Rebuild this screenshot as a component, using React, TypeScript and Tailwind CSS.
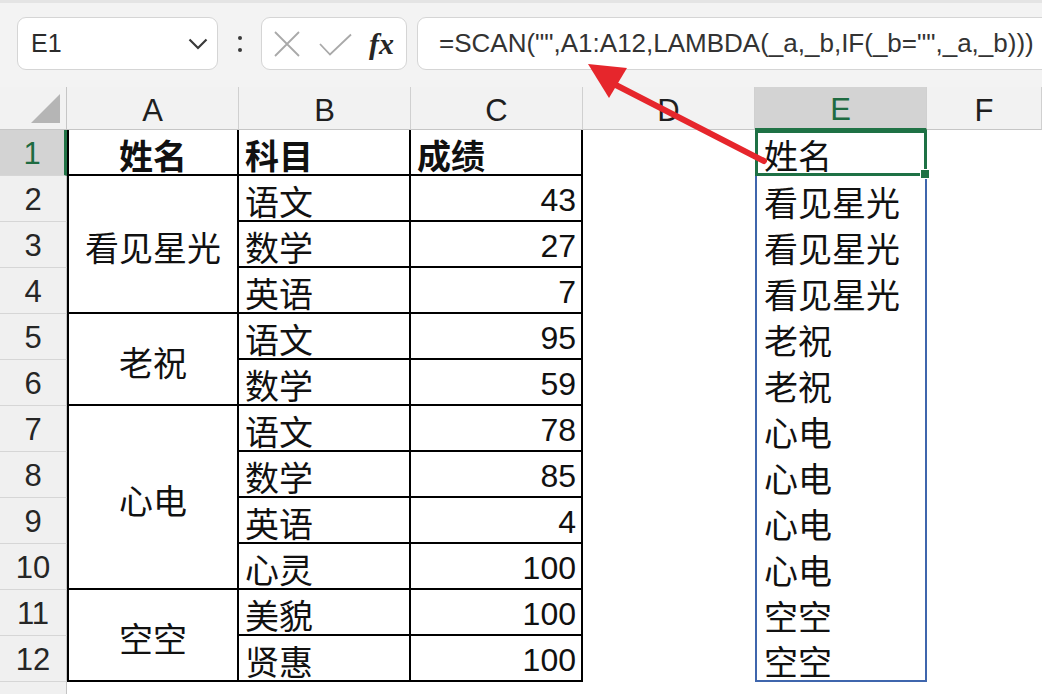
import React from "react";

type Row = {
  name?: string;
  span?: number;
  subject: string;
  score: number;
  spill: string;
};

const rows: Row[] = [
  { name: "看见星光", span: 3, subject: "语文", score: 43, spill: "看见星光" },
  { subject: "数学", score: 27, spill: "看见星光" },
  { subject: "英语", score: 7, spill: "看见星光" },
  { name: "老祝", span: 2, subject: "语文", score: 95, spill: "老祝" },
  { subject: "数学", score: 59, spill: "老祝" },
  { name: "心电", span: 4, subject: "语文", score: 78, spill: "心电" },
  { subject: "数学", score: 85, spill: "心电" },
  { subject: "英语", score: 4, spill: "心电" },
  { subject: "心灵", score: 100, spill: "心电" },
  { name: "空空", span: 2, subject: "美貌", score: 100, spill: "空空" },
  { subject: "贤惠", score: 100, spill: "空空" },
];

const spanClass: Record<number, string> = {
  2: "row-span-2",
  3: "row-span-3",
  4: "row-span-4",
};

const cjk = "font-['Noto_Sans_CJK_SC',sans-serif] text-[34px] text-[#111]";
const latin = "font-['Liberation_Sans',sans-serif]";

function RowHead({ n, active }: { n: number; active?: boolean }) {
  return (
    <div
      className={
        "flex items-center justify-center pt-[3px] text-[31px] border-b border-[#d6d6d6] " +
        latin +
        (active
          ? " bg-[#d3d3d3] text-[#1e6b41] border-r-[3px] border-r-[#217346]"
          : " bg-[#f0f0f0] text-[#262626] border-r border-r-[#c4c4c4]")
      }
    >
      {n}
    </div>
  );
}

function ColHead({ label, active }: { label: string; active?: boolean }) {
  return (
    <div
      className={
        "flex items-center justify-center pt-[6px] text-[31px] border-r border-[#d0d0d0] " +
        latin +
        (active
          ? " bg-[#d3d3d3] text-[#1e6b41] border-b-2 border-b-[#217346]"
          : " bg-[#f2f2f2] text-[#1f1f1f] border-b border-b-[#c6c6c6]")
      }
    >
      {label}
    </div>
  );
}

function Toolbar() {
  return (
    <div className="flex h-[87px] items-start bg-[#f3f3f3] pt-[14px] pl-[17px] border-t-[3px] border-[#e4e4e4]">
      <div className="flex h-[53px] w-[201px] shrink-0 items-center justify-between rounded-[9px] border border-[#d5d5d5] bg-white pl-[13px] pr-[9px]">
        <span className={"text-[25px] text-[#2b2b2b] " + latin}>E1</span>
        <svg width="20" height="12" viewBox="0 0 20 12">
          <polyline points="1.5,1.5 10,10 18.5,1.5" fill="none" stroke="#3a3a3a" strokeWidth="2.2" />
        </svg>
      </div>
      <div className="flex h-[53px] w-[43px] shrink-0 flex-col items-center justify-center gap-[8px]">
        <div className="h-[4px] w-[4px] rounded-full bg-[#3a3a3a]" />
        <div className="h-[4px] w-[4px] rounded-full bg-[#3a3a3a]" />
      </div>
      <div className="flex h-[53px] w-[146px] shrink-0 items-center rounded-[9px] border border-[#d5d5d5] bg-white pl-[12px]">
        <svg width="26" height="26" viewBox="0 0 26 26">
          <path d="M1 1 L25 25 M25 1 L1 25" stroke="#a9a9a9" strokeWidth="1.8" />
        </svg>
        <svg width="34" height="24" viewBox="0 0 34 24" className="ml-[19px] mt-[2px]">
          <polyline points="1,11 11,21.5 32,1.5" fill="none" stroke="#a9a9a9" strokeWidth="1.8" />
        </svg>
        <span className="ml-[16px] font-['Liberation_Serif',serif] text-[30px] font-bold italic leading-none text-[#262626]">
          fx
        </span>
      </div>
      <div className={"ml-[10px] flex h-[53px] w-[660px] shrink-0 items-center rounded-[9px] border border-[#d5d5d5] bg-white pl-[21px] text-[26px] text-[#333] " + latin}>
        {'=SCAN("",A1:A12,LAMBDA(_a,_b,IF(_b="",_a,_b)))'}
      </div>
    </div>
  );
}

export default function App() {
  return (
    <div className="relative h-[694px] w-[1042px] overflow-hidden bg-white">
      <Toolbar />
      <div className="grid h-[607px] grid-cols-[67px_172px_172px_172px_172px_172px_1fr] grid-rows-[43px_repeat(12,46px)_1fr] bg-white">
        {/* header row */}
        <div className="flex items-end justify-end border-r border-b border-[#c6c6c6] bg-[#f2f2f2] pb-[6px] pr-[6px]">
          <svg width="29" height="29" viewBox="0 0 29 29">
            <polygon points="29,0 29,29 0,29" fill="#b5b5b5" />
          </svg>
        </div>
        <ColHead label="A" />
        <ColHead label="B" />
        <ColHead label="C" />
        <ColHead label="D" />
        <ColHead label="E" active />
        <ColHead label="F" />

        {/* row 1 */}
        <RowHead n={1} active />
        <div className={"flex items-center justify-center border-x-2 border-b-2 border-black pt-[4px] font-bold " + cjk}>
          姓名
        </div>
        <div className={"flex items-center border-r-2 border-b-2 border-black pl-[6px] pt-[4px] font-bold " + cjk}>
          科目
        </div>
        <div className={"flex items-center border-r-2 border-b-2 border-black pl-[6px] pt-[4px] font-bold " + cjk}>
          成绩
        </div>
        <div />
        <div className={"relative flex items-center border-[3px] border-[#1e7145] pl-[6px] pt-[3px] " + cjk}>
          姓名
          <div className="absolute -right-[6px] -bottom-[6px] h-[10px] w-[10px] border border-white bg-[#1e7145]" />
        </div>
        <div />

        {rows.map((r, i) => (
          <React.Fragment key={i}>
            <RowHead n={i + 2} />
            {r.name && (
              <div
                className={
                  "flex items-center justify-center border-x-2 border-b-2 border-black pt-[4px] " +
                  spanClass[r.span ?? 2] +
                  " " +
                  cjk
                }
              >
                {r.name}
              </div>
            )}
            <div className={"flex items-center border-r-2 border-b-2 border-black pl-[6px] pt-[4px] " + cjk}>
              {r.subject}
            </div>
            <div
              className={
                "flex items-center justify-end border-r-2 border-b-2 border-black pr-[5px] pt-[4px] text-[32px] text-[#111] " +
                latin
              }
            >
              {r.score}
            </div>
            <div />
            <div
              className={
                "flex items-center border-x-2 border-[#3f66ad] pl-[7px] pt-[4px] " +
                (i === rows.length - 1 ? "border-b-2 " : "") +
                cjk
              }
            >
              {r.spill}
            </div>
            <div />
          </React.Fragment>
        ))}

        {/* partial row 13 */}
        <div className="border-r border-[#c4c4c4] bg-[#f0f0f0]" />
      </div>

      <svg className="pointer-events-none absolute inset-0" width="1042" height="694" viewBox="0 0 1042 694">
        <line x1="764" y1="161" x2="610" y2="82" stroke="#e6262c" strokeWidth="6" strokeLinecap="round" />
        <polygon points="588,64 627,68 609,98" fill="#e6262c" />
      </svg>
    </div>
  );
}
